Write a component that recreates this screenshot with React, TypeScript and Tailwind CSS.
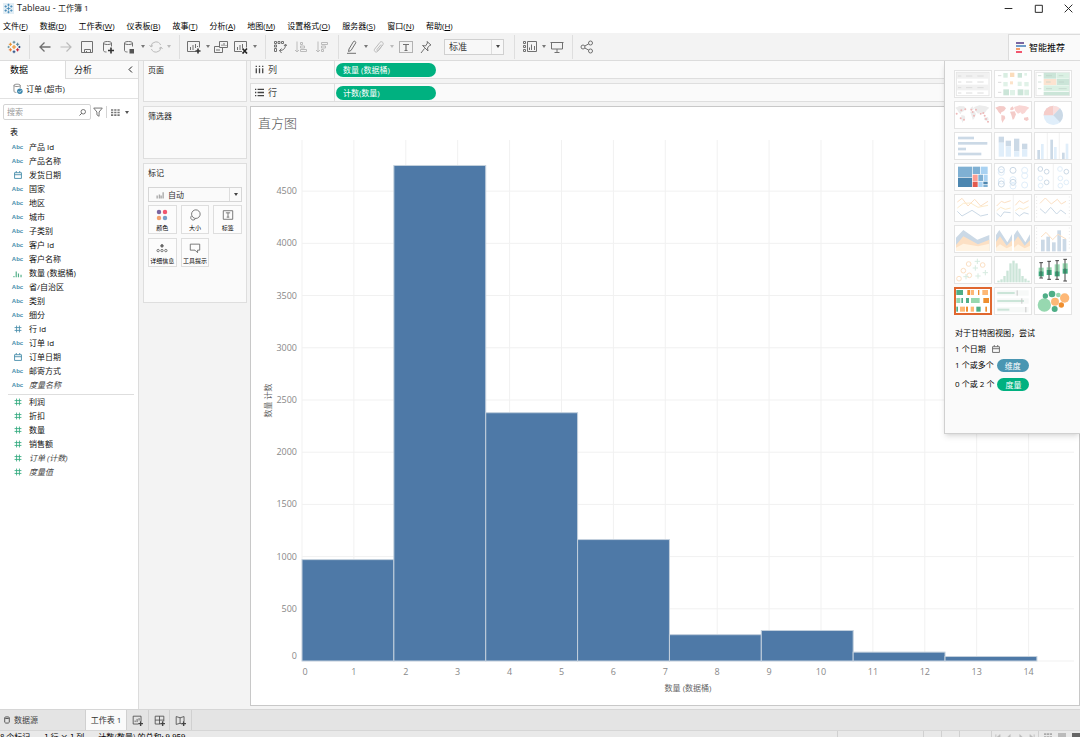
import React from 'react';

const menus = [
  { label: '文件', key: 'F' },
  { label: '数据', key: 'D' },
  { label: '工作表', key: 'W' },
  { label: '仪表板', key: 'B' },
  { label: '故事', key: 'T' },
  { label: '分析', key: 'A' },
  { label: '地图', key: 'M' },
  { label: '设置格式', key: 'O' },
  { label: '服务器', key: 'S' },
  { label: '窗口', key: 'N' },
  { label: '帮助', key: 'H' },
];

type Field = { icon: 'abc' | 'date' | 'bin' | 'num'; name: string; italic?: boolean };

const dimensions: Field[] = [
  { icon: 'abc', name: '产品 Id' },
  { icon: 'abc', name: '产品名称' },
  { icon: 'date', name: '发货日期' },
  { icon: 'abc', name: '国家' },
  { icon: 'abc', name: '地区' },
  { icon: 'abc', name: '城市' },
  { icon: 'abc', name: '子类别' },
  { icon: 'abc', name: '客户 Id' },
  { icon: 'abc', name: '客户名称' },
  { icon: 'bin', name: '数量 (数据桶)' },
  { icon: 'abc', name: '省/自治区' },
  { icon: 'abc', name: '类别' },
  { icon: 'abc', name: '细分' },
  { icon: 'num', name: '行 Id' },
  { icon: 'abc', name: '订单 Id' },
  { icon: 'date', name: '订单日期' },
  { icon: 'abc', name: '邮寄方式' },
  { icon: 'abc', name: '度量名称', italic: true },
];

const measures: Field[] = [
  { icon: 'num', name: '利润' },
  { icon: 'num', name: '折扣' },
  { icon: 'num', name: '数量' },
  { icon: 'num', name: '销售额' },
  { icon: 'num', name: '订单 (计数)', italic: true },
  { icon: 'num', name: '度量值', italic: true },
];

const BIN_SIZE = 1.77;
const X_MAX = 14.875;
const Y_MAX = 4990;
const bins = [971, 4746, 2378, 1163, 252, 292, 85, 43];

/* ---------- icons ---------- */

const Icon = ({ children, size = 'size-[14px]', className = '' }: { children: React.ReactNode; size?: string; className?: string }) => (
  <svg viewBox="0 0 14 14" className={`${size} shrink-0 ${className}`} fill="none" stroke="currentColor" strokeWidth="1" aria-hidden="true">
    {children}
  </svg>
);

const Caret = ({ className = 'text-[#777]' }: { className?: string }) => (
  <span className={`flex w-2 shrink-0 items-center justify-center ${className}`}>
    <svg viewBox="0 0 4 3" className="h-[3px] w-1" fill="currentColor" aria-hidden="true">
      <path d="M0 0h4L2 3z" />
    </svg>
  </span>
);

const plus = (x: number, y: number, r: number) => `M${x - r} ${y}h${2 * r}M${x} ${y - r}v${2 * r}`;

const TableauLogo = () => (
  <Icon>
    <path d={plus(7, 7, 2)} stroke="#eb912c" strokeWidth="1.1" />
    <path d={plus(7, 2.2, 1.4)} stroke="#5b879b" />
    <path d={plus(7, 11.8, 1.4)} stroke="#1f447e" />
    <path d={plus(3.4, 4.3, 1.6)} stroke="#eb912c" />
    <path d={plus(10.6, 4.3, 1.6)} stroke="#59879b" />
    <path d={plus(3.4, 9.8, 1.6)} stroke="#e8762c" />
    <path d={plus(10.6, 9.8, 1.6)} stroke="#c72035" />
    <path d={plus(1.6, 7, 1.1)} stroke="#7099a6" />
    <path d={plus(12.4, 7, 1.1)} stroke="#1f447e" />
  </Icon>
);

const WindowLogo = () => (
  <Icon size="size-[11px]">
    <rect x="0" y="0" width="14" height="14" fill="#e3eef5" stroke="none" />
    <path
      stroke="#3e86b5"
      d={plus(7, 7, 2.4) + plus(7, 2.4, 1.5) + plus(7, 11.6, 1.5) + plus(3.4, 4.4, 1.5) + plus(10.6, 4.4, 1.5) + plus(3.4, 9.6, 1.5) + plus(10.6, 9.6, 1.5)}
    />
  </Icon>
);

const BackIcon = () => <Icon><path strokeWidth="1.3" d="M12.5 7H2M6.5 2.5 2 7l4.5 4.5" /></Icon>;
const ForwardIcon = () => <Icon><path strokeWidth="1.2" d="M1.5 7H12M7.5 2.5 12 7l-4.5 4.5" /></Icon>;
const SaveIcon = () => <Icon><path d="M1.5 1.5h11v11h-11zM4.5 12.5v-3h6v3M6.5 11v1.5" /></Icon>;
const Cylinder = () => <path d="M2.5 3v7.5c0 1 1.5 1.5 3 1.5M10.5 3v3.5M2.5 3c0-1 1.8-1.5 4-1.5s4 .5 4 1.5-1.8 1.5-4 1.5-4-.5-4-1.5" />;
const AddSourceIcon = () => <Icon><Cylinder /><path stroke="#333" strokeWidth="1.6" d="M7 10.5h6M10 7.5v6" /></Icon>;
const PauseSourceIcon = () => <Icon><Cylinder /><path fill="#555" stroke="none" d="M7.5 9h4.5v4.5H7.5z" /></Icon>;
const RefreshIcon = () => <Icon><path d="M2 6.5a5 5 0 0 1 9.6-1.500M12 7.500a5 5 0 0 1-9.600 1.500M.5 5 2 7l2-1.500M10 8.500l2-1.500 1.500 2" /></Icon>;
const NewSheetIcon = () => (
  <Icon><path d="M9 11.5H.5v-10h12v6M3.5 10V7M6 10V5M8.5 8V4M10.5 7V6" /><path stroke="#333" strokeWidth="1.6" d="M8.5 11h5M11 8.5v5" /></Icon>
);
const DuplicateIcon = () => <Icon><path d="M5.5 1.5h8v6h-8zM8 6V4.500M10 6V3M12 6V5M5 6.500H.5v6h8V8M3 11v-2M5 11V9" /></Icon>;
const ClearSheetIcon = () => (
  <Icon><path d="M8 11.500H.5v-10h12v6M3.500 10V7M6 10V5M8.500 8V4" /><path stroke="#222" strokeWidth="1.600" d="m8.500 8.500 4.500 5M13 8.500l-4.500 5" /></Icon>
);
const SwapIcon = () => (
  <Icon><path d="M1.500 1.500h2v2h-2zM5 1.500h2v2H5zM8.500 1.500h2v2h-2zM1.500 5h2v2h-2zM1.500 8.500h2v3h-2zM12.500 4.500c0 4-2 6-6 6M11 6l1.500-2L14 6M8.500 8.500l-2 2 2 2.500" /></Icon>
);
const SortAscIcon = () => <Icon><path d="M3 1.500v10.500M1 10l2 2 2-2M6.500 2.500h2v2h-2zM6.500 6h4v2h-4zM6.500 9.500h6v2h-6z" /></Icon>;
const SortDescIcon = () => <Icon><path d="M3 1.500v10.500M1 10l2 2 2-2M6.500 2.500h6v2h-6zM6.500 6h4v2h-4zM6.500 9.500h2v2h-2z" /></Icon>;
const HighlightIcon = () => <Icon><path d="m4 9 4.500-7.500c1-.8 2.500 0 2.300 1.300L6 10.500l-2.500 1zM2 13.300h9" /></Icon>;
const ClipIcon = () => <Icon><path d="m10.500 5-5 6.500c-1.500 1.500-4-.3-3-2.200l5.500-7c1.300-1.600 4 .2 3 2.200L6.500 10.500c-1 .8-2 0-1.500-1l4-5" /></Icon>;
const TextLabelIcon = () => (
  <Icon><path strokeDasharray="1 1" d="M.5 1.500h13v11H.5z" /><path strokeWidth="1.200" d="M4 4.500h6M7 4.500v6M5.500 10.500h3" /></Icon>
);
const PinIcon = () => <Icon><path d="M8 1.500 12 5l-1.500.5-2 2.500.5 3L3.500 5.500l3 .5L8.500 3zM5.500 8.500 2 13" /></Icon>;
const CardsIcon = () => (
  <Icon><path d="M.5 1.500h2v2h-2zM.5 5.500h2v2h-2zM.5 9.500h2v2h-2zM4.500 1.500h9v10h-9z" /><path d="M6.500 10V7.500M8.500 10V4.500M11.500 10V6" /></Icon>
);
const PresentIcon = () => <Icon><path d="M.5 2.500h13M1.500 2.500v6.500h11V2.500M7 9v3.500M4.500 12.500h5" /></Icon>;
const ShareIcon = () => (
  <Icon><circle cx="3" cy="7" r="2" /><circle cx="10.500" cy="3" r="2" /><circle cx="10.500" cy="11" r="2" /><path d="m4.800 6 4-2.200M4.800 8l4 2.200" /></Icon>
);

const CalendarIcon = ({ className = '' }: { className?: string }) => (
  <Icon size="size-2" className={className}><path strokeWidth="1.600" d="M1 3h12v10H1zM1 6.500h12M4 0v3M10 0v3" /></Icon>
);

const FieldIcon = ({ icon }: { icon: Field['icon'] }) => {
  if (icon === 'abc') return <span className="font-['Liberation_Sans',sans-serif] text-[6px] font-bold text-[#4a8fac]">Abc</span>;
  if (icon === 'date') return <CalendarIcon />;
  if (icon === 'bin')
    return <Icon size="size-[9px]" className="text-[#4fae87]"><path strokeWidth="1.800" d="M1.500 13v-2M5 13V4M8.500 13V7M12.500 13v-4" /></Icon>;
  return <Icon size="size-2"><path strokeWidth="1.500" d="M4.500 1v12M9.500 1v12M1 4.500h12M1 9.500h12" /></Icon>;
};

/* ---------- show-me thumbnails, drawn on a 114x84 grid ---------- */

const R = ({ x, y, w, h, f }: { x: number; y: number; w: number; h: number; f: string }) => <rect x={x} y={y} width={w} height={h} fill={f} />;

const lands = [
  'M4 20 16 15 30 16 36 22 30 30 22 34 20 40 14 34 10 27z',
  'M22 42 32 44 34 52 28 60 26 66 22 56z',
  'M50 20 56 16 60 24 54 28 48 26z',
  'M48 32 62 31 66 40 60 54 56 56 52 42z',
  'M60 18 76 13 96 16 106 20 98 28 92 36 84 40 80 34 72 38 64 30z',
  'M90 50 102 48 104 56 98 60 90 56z',
];

const TextTable = () => (
  <>
    <rect x="7" y="7" width="98" height="70" fill="#fff" stroke="#e6e6e6" strokeWidth="3" />
    <R x={9} y={9} w={94} h={17} f="#f1f1f1" />
    <R x={9} y={44} w={94} h={17} f="#f1f1f1" />
    {[18, 36, 53, 69].map((y) => (
      <path key={y} d={`M12 ${y}h10M36 ${y}h19M70 ${y}h19`} stroke="#dcdcdc" strokeWidth="3" />
    ))}
  </>
);

const HeatMap = () => (
  <>
    <path d="M12 17h10M12 37h10M12 67h10" stroke="#ddd" strokeWidth="3" />
    <R x={28} y={9} w={13} h={14} f="#d9eee2" />
    <R x={48} y={8} w={13} h={13} f="#fbdcbb" />
    <R x={71} y={9} w={13} h={14} f="#cbe5d8" />
    <R x={91} y={9} w={8} h={8} f="#e0f2e8" />
    <R x={28} y={36} w={13} h={13} f="#e0f2e8" />
    <R x={48} y={34} w={9} h={9} f="#fce3ca" />
    <R x={71} y={35} w={12} h={13} f="#e0f2e8" />
    <R x={91} y={36} w={13} h={13} f="#e0f2e8" />
    <R x={28} y={58} w={17} h={18} f="#cbe5d8" />
    <R x={48} y={60} w={15} h={16} f="#e0f2e8" />
    <R x={71} y={58} w={17} h={18} f="#cbe5d8" />
    <R x={91} y={59} w={14} h={17} f="#d9eee2" />
  </>
);

const HighlightTable = () => (
  <>
    <rect x="6" y="7" width="100" height="70" fill="#fff" stroke="#e6e6e6" strokeWidth="3" />
    <R x={29} y={8} w={38} h={18} f="#cbe5d8" />
    <R x={68} y={8} w={38} h={18} f="#daf0e3" />
    <R x={29} y={27} w={38} h={18} f="#fce3d0" />
    <R x={68} y={27} w={38} h={18} f="#cbe5d8" />
    <R x={29} y={46} w={77} h={18} f="#daf0e3" />
    <R x={29} y={66} w={77} h={10} f="#cbe5d8" />
    <path d="M12 17h10M12 36h10M12 56h10M36 17h18M74 17h14M36 36h14M74 36h16M36 56h18M74 56h24" stroke="#bcd0c6" strokeWidth="2" />
  </>
);

const SymbolMap = () => (
  <>
    {lands.map((d) => <path key={d} d={d} fill="#ececec" />)}
    {[[8, 38], [22, 28], [34, 25], [20, 52], [30, 56], [52, 26], [56, 33], [60, 44], [80, 38], [88, 36], [92, 44], [96, 54], [102, 62], [66, 26]].map(([x, y]) => (
      <circle key={`${x}-${y}`} cx={x} cy={y} r="3" fill="#eeb9b9" />
    ))}
  </>
);

const FilledMap = () => (
  <>{lands.map((d, i) => <path key={d} d={d} fill={i === 4 ? '#f9d6d4' : '#f4cbc8'} />)}</>
);

const Pie = () => (
  <>
    <circle cx="58" cy="43" r="29" fill="#e0eefa" />
    <path d="M58 43V14A29 29 0 0 0 29 43z" fill="#f6cdc9" />
    <path d="M58 43V14A29 29 0 0 1 78 22z" fill="#fbdedc" />
    <path d="M58 43 78 22A29 29 0 0 1 78 64z" fill="#cbd9e6" />
  </>
);

const HBars = () => (
  <>
    <R x={12} y={14} w={48} h={8} f="#cbd9e6" />
    <R x={12} y={30} w={88} h={8} f="#cbd9e6" />
    <R x={12} y={47} w={24} h={8} f="#cbd9e6" />
    <R x={12} y={62} w={70} h={8} f="#cbd9e6" />
  </>
);

const StackedBars = () => (
  <>
    {[[14, 14, 32], [35, 26, 43], [60, 20, 58], [84, 35, 52]].map(([x, a, b]) => (
      <g key={x}>
        <R x={x} y={a} w={16} h={b - a} f="#cbd9e6" />
        <R x={x} y={b} w={16} h={74 - b} f="#e0eefa" />
      </g>
    ))}
  </>
);

const SideBars = () => (
  <>
    <path d="M40 3v78M76 3v78" stroke="#ececec" strokeWidth="2" />
    {[[10, 54, 36], [49, 23, 45], [84, 62, 35]].map(([x, a, b]) => (
      <g key={x}>
        <R x={x} y={a} w={8} h={82 - a} f="#cbd9e6" />
        <R x={x + 11} y={b} w={8} h={82 - b} f="#e0eefa" />
      </g>
    ))}
  </>
);

const TreeMap = () => (
  <>
    <R x={12} y={11} w={42} h={31} f="#7fb0d3" />
    <R x={12} y={44} w={42} h={28} f="#4c86b0" />
    <R x={56} y={11} w={22} h={22} f="#7fb0d3" />
    <R x={80} y={11} w={21} h={22} f="#a9d2f2" />
    <R x={56} y={35} w={15} h={19} f="#fd9e92" />
    <R x={56} y={56} w={15} h={16} f="#e15b50" />
    <R x={73} y={35} w={14} h={19} f="#7fb0d3" />
    <R x={89} y={35} w={12} h={19} f="#a9d2f2" />
    <R x={73} y={56} w={13} h={16} f="#a9d2f2" />
    <R x={88} y={56} w={13} h={8} f="#4c86b0" />
    <R x={88} y={66} w={13} h={6} f="#7fb0d3" />
  </>
);

const Rings = ({ points, r }: { points: number[][]; r: number }) => (
  <>
    {points.map(([x, y, dark]) => (
      <circle key={`${x}-${y}`} cx={x} cy={y} r={r} fill="none" strokeWidth="3" stroke={dark ? '#cbd9e6' : '#e0eefa'} />
    ))}
  </>
);

const CircleViews = () => (
  <Rings r={9} points={[[22, 20, 1], [22, 28, 0], [22, 54, 0], [22, 63, 1], [57, 22, 1], [57, 50, 0], [57, 58, 1], [57, 69, 0], [92, 22, 0], [92, 38, 0], [92, 66, 0]]} />
);

const SideCircles = () => (
  <>
    <path d="M58 3v78" stroke="#ececec" strokeWidth="2" />
    <Rings r={7} points={[[19, 18, 1], [38, 26, 1], [19, 46, 0], [38, 58, 1], [20, 68, 0], [78, 18, 0], [97, 26, 1], [79, 46, 0], [97, 58, 0], [79, 68, 0]]} />
  </>
);

const Poly = ({ p, c }: { p: string; c: string }) => <polyline points={p} fill="none" stroke={c} strokeWidth="3" />;

const Lines = () => (
  <>
    <Poly p="10,24 24,13 42,36 62,16 80,36 102,22" c="#fce0c4" />
    <Poly p="10,42 28,28 50,27 72,40 102,34" c="#fdebcb" />
    <Poly p="10,52 24,66 54,49 80,66 102,61" c="#cbd9e6" />
  </>
);

const DiscreteLines = () => (
  <>
    <path d="M58 3v78" stroke="#ececec" strokeWidth="2" />
    <Poly p="8,36 22,22 32,26 50,20" c="#fce0c4" />
    <Poly p="64,34 76,20 88,28 104,20" c="#fce0c4" />
    <Poly p="8,50 20,40 34,46 50,42" c="#fdebcb" />
    <Poly p="64,50 76,42 88,46 104,38" c="#fdebcb" />
    <Poly p="8,58 20,68 30,54 50,56" c="#cbd9e6" />
    <Poly p="64,56 76,66 90,56 104,60" c="#cbd9e6" />
  </>
);

const DualLines = () => (
  <>
    <path strokeDasharray="2 8" d="M8 8v70M106 8v70" stroke="#ddd" strokeWidth="3" />
    <Poly p="18,28 34,12 52,30 70,16 82,30 96,22" c="#fce0c4" />
    <Poly p="18,44 34,58 50,40 68,60 80,48 96,60" c="#cbd9e6" />
  </>
);

const Area = () => (
  <>
    <path d="M6 38 28 15 70 44 106 30V78H6z" fill="#cbd9e6" />
    <path d="M6 60 28 34 72 58 106 44V78H6z" fill="#fce0c4" />
    <path d="M6 68 28 56 72 64 106 56V78H6z" fill="#fff3e2" />
  </>
);

const DiscreteArea = () => (
  <>
    {[6, 60].map((x) => (
      <g key={x} transform={`translate(${x} 0)`}>
        <path d="M0 30 10 15 34 52 48 28V78H0z" fill="#cbd9e6" />
        <path d="M0 50 12 34 32 62 48 46V78H0z" fill="#fce0c4" />
        <path d="M0 68 12 58 32 70 48 62V78H0z" fill="#fff3e2" />
      </g>
    ))}
  </>
);

const Combo = () => (
  <>
    <path strokeDasharray="2 8" d="M8 8v70M106 8v70" stroke="#ddd" strokeWidth="3" />
    {[[21, 44], [37, 35], [54, 52], [70, 16], [86, 42]].map(([x, y]) => <R key={x} x={x} y={y} w={11} h={79 - y} f="#cbd9e6" />)}
    <Poly p="21,36 36,22 56,44 72,28 96,42" c="#fce0c4" />
  </>
);

const Scatter = () => (
  <>
    {[[44, 24], [28, 44], [86, 27], [15, 68], [46, 58]].map(([x, y]) => <circle key={x} cx={x} cy={y} r="7" fill="none" stroke="#fce0c4" strokeWidth="3" />)}
    <path d={plus(70, 16, 8) + plus(64, 36, 8) + plus(36, 62, 8) + plus(72, 60, 8) + plus(94, 50, 8)} stroke="#d7ebe0" strokeWidth="3" />
  </>
);

const Histogram = () => (
  <>
    {[74, 70, 60, 44, 22, 14, 22, 38, 60, 68, 74].map((y, i) => <R key={i} x={10 + i * 9} y={y} w={7} h={79 - y} f="#cbe5d8" />)}
  </>
);

const BoxPlot = () => (
  <>
    {[[14, 35, 20, 46, 66], [38, 34, 16, 42, 70], [62, 25, 14, 46, 70], [86, 22, 10, 38, 75]].map(([x, a, top, m, bottom]) => (
      <g key={x}>
        <path d={`M${x + 7} ${top}V${bottom}M${x + 2} ${top}h11M${x + 2} ${bottom}h11`} stroke="#444" strokeWidth="3" />
        <R x={x} y={a} w={15} h={m - a} f="#97d8b0" />
        <R x={x} y={m} w={15} h={15} f="#3ea67b" />
        <path d={`M${x + 7} ${a}V${m + 15}`} stroke="#444" strokeWidth="2" />
      </g>
    ))}
  </>
);

const gantt: [number, number, number, string][] = [
  [7, 9, 20, '#4fae87'], [40, 9, 8, '#ef8e2f'], [50, 9, 10, '#fdb877'], [72, 9, 4, '#ef8e2f'], [85, 9, 17, '#fdb877'],
  [7, 33, 12, '#97d8b0'], [22, 33, 5, '#4fae87'], [36, 33, 9, '#4fae87'], [51, 33, 26, '#97d8b0'], [88, 33, 17, '#ef8e2f'],
  [7, 59, 5, '#4fae87'], [18, 59, 15, '#fdb877'], [36, 59, 6, '#ef8e2f'], [50, 59, 10, '#fdb877'], [67, 59, 13, '#4fae87'], [94, 59, 5, '#ef8e2f'],
];

const Gantt = () => <>{gantt.map(([x, y, w, f]) => <R key={`${x}-${y}`} x={x} y={y} w={w} h={15} f={f} />)}</>;

const Bullet = () => (
  <>
    {[[10, 52, 68], [34, 80, 82], [60, 36, 94]].map(([y, w, m]) => (
      <g key={y}>
        <R x={8} y={y} w={96} h={16} f="#f7f9f8" />
        <R x={10} y={y + 5} w={w} h={6} f="#cbe5d8" />
        <R x={m} y={y} w={3} h={16} f="#c8c8c8" />
      </g>
    ))}
  </>
);

const Bubbles = () => (
  <>
    {([[31, 54, 20, '#97d8b0'], [34, 27, 8, '#4fae87'], [54, 21, 10, '#4fae87'], [73, 24, 7, '#97d8b0'], [63, 44, 12, '#fdb877'], [92, 33, 14, '#fdb877'], [82, 54, 8, '#ef8e2f'], [62, 66, 9, '#4fae87']] as [number, number, number, string][]).map(([x, y, r, f]) => (
      <circle key={x} cx={x} cy={y} r={r} fill={f} />
    ))}
  </>
);

const showMe: [string, React.FC][] = [
  ['文本表', TextTable], ['热图', HeatMap], ['突出显示表', HighlightTable],
  ['符号地图', SymbolMap], ['填充地图', FilledMap], ['饼图', Pie],
  ['水平条', HBars], ['堆叠条', StackedBars], ['并排条', SideBars],
  ['树状图', TreeMap], ['圆视图', CircleViews], ['并排圆', SideCircles],
  ['线(连续)', Lines], ['线(离散)', DiscreteLines], ['双线', DualLines],
  ['区域(连续)', Area], ['区域(离散)', DiscreteArea], ['双组合', Combo],
  ['散点图', Scatter], ['直方图', Histogram], ['盒须图', BoxPlot],
  ['甘特图', Gantt], ['靶心图', Bullet], ['填充气泡图', Bubbles],
];

/* ---------- sections ---------- */

const TitleBar = () => (
  <header className="flex h-4 items-center bg-white px-[3px]">
    <WindowLogo />
    <h1 className="ml-[3px] text-[9px]">Tableau - <span className="text-[8px]">工作簿 1</span></h1>
    <div className="ml-auto flex items-center pr-1 text-[#222]">
      <button aria-label="最小化"><Icon size="size-[9px]"><path strokeWidth="1.500" d="M1 7h12" /></Icon></button>
      <button aria-label="最大化" className="ml-[21px]"><Icon size="size-[9px]"><path strokeWidth="1.500" d="M2 2h11v11H2z" /></Icon></button>
      <button aria-label="关闭" className="ml-[21px]"><Icon size="size-[9px]"><path strokeWidth="1.500" d="m1 1 12 12M13 1 1 13" /></Icon></button>
    </div>
  </header>
);

const MenuBar = () => (
  <nav className="flex h-[17px] items-end gap-3 bg-white px-[3px] pb-px">
    {menus.map((m) => (
      <button key={m.key} className="whitespace-nowrap text-[8px] leading-3 text-black">
        {m.label}(<span className="underline">{m.key}</span>)
      </button>
    ))}
  </nav>
);

const Tool = ({ label, width = 'w-[21px]', muted, children }: { label: string; width?: string; muted?: boolean; children: React.ReactNode }) => (
  <button aria-label={label} title={label} className={`flex h-full shrink-0 items-center justify-center ${width} ${muted ? 'text-[#bbb]' : 'text-[#707070]'}`}>
    {children}
  </button>
);

const Divider = () => <span className="mr-[3px] ml-[6px] h-6 w-px shrink-0 self-center bg-[#dedede]" />;

const Toolbar = () => (
  <div className="flex h-7 items-center border-b border-[#dcdcdc] bg-[#f3f3f3]">
    <Tool label="起始页" width="w-7"><TableauLogo /></Tool>
    <span className="mr-1 ml-px h-6 w-px shrink-0 bg-[#dedede]" />
    <Tool label="撤消"><BackIcon /></Tool>
    <Tool label="重做" muted><ForwardIcon /></Tool>
    <Tool label="保存"><SaveIcon /></Tool>
    <Tool label="新建数据源"><AddSourceIcon /></Tool>
    <Tool label="暂停自动更新"><PauseSourceIcon /></Tool>
    <Caret />
    <Tool label="运行更新" width="w-[18px]" muted><RefreshIcon /></Tool>
    <Caret className="text-[#bbb]" />
    <Divider />
    <Tool label="新建工作表"><NewSheetIcon /></Tool>
    <Caret />
    <Tool label="复制工作表" width="w-[18px]"><DuplicateIcon /></Tool>
    <Tool label="清除工作表"><ClearSheetIcon /></Tool>
    <Caret />
    <Divider />
    <Tool label="交换行和列"><SwapIcon /></Tool>
    <Tool label="升序排序" muted><SortAscIcon /></Tool>
    <Tool label="降序排序" muted><SortDescIcon /></Tool>
    <Divider />
    <Tool label="突出显示" width="w-5"><HighlightIcon /></Tool>
    <Caret />
    <Tool label="组成员" width="w-[18px]" muted><ClipIcon /></Tool>
    <Caret className="text-[#bbb]" />
    <Tool label="显示标记标签" width="w-5"><TextLabelIcon /></Tool>
    <Tool label="固定轴" width="w-5"><PinIcon /></Tool>
    <div className="relative ml-2 flex h-4 w-[60px] shrink-0 border border-[#d0d0d0] bg-[#f8f8f8]">
      <select aria-label="适合" className="w-full appearance-none bg-transparent pl-1 text-[9px] leading-3 text-[#333] outline-none">
        <option>标准</option>
      </select>
      <span className="pointer-events-none absolute inset-y-0 right-0 flex w-3 items-center justify-center border-l border-[#ddd]">
        <Caret className="text-[#444]" />
      </span>
    </div>
    <span className="mr-1 ml-[10px] h-6 w-px shrink-0 bg-[#dedede]" />
    <Tool label="显示/隐藏卡"><CardsIcon /></Tool>
    <Caret />
    <Tool label="演示模式" width="w-[18px]"><PresentIcon /></Tool>
    <Divider />
    <Tool label="共享工作簿"><ShareIcon /></Tool>
    <button className="ml-auto flex h-[26px] w-[72px] shrink-0 items-center gap-[3px] self-end border-t border-l border-[#dcdcdc] bg-[#fafafa] pl-[7px] text-[9px] text-black">
      <svg viewBox="0 0 10 11" className="h-[11px] w-[10px]" aria-hidden="true">
        <path d="M0 0h8v2H0z" fill="#7b66a0" />
        <path d="M0 3h10v2H0z" fill="#6f9bc9" />
        <path d="M0 6h4v2H0z" fill="#f5a06c" />
        <path d="M0 9h6v2H0z" fill="#f2566e" />
      </svg>
      智能推荐
    </button>
  </div>
);

const FieldRow = ({ field, color }: { field: Field; color: string }) => (
  <li className="flex h-[14px] items-center pl-[10px]">
    <span className={`flex w-[15px] justify-center ${color}`}><FieldIcon icon={field.icon} /></span>
    <span className={`ml-1 text-[8px] ${field.italic ? 'text-[#444] italic' : 'text-[#111]'}`}>{field.name}</span>
  </li>
);

const DataPane = () => (
  <aside className="w-[139px] shrink-0 border-r border-[#dcdcdc] bg-white">
    <div className="flex h-[18px] text-[9px]">
      <button className="w-[65px] pl-[10px] text-left text-black">数据</button>
      <button className="flex flex-1 items-center justify-between border-b border-l border-[#dcdcdc] bg-[#fafafa] pr-1 pl-2 text-[#222]">
        分析
        <Icon size="size-[7px]"><path strokeWidth="2" d="M10 1 4 7l6 6" /></Icon>
      </button>
    </div>
    <div className="flex h-5 items-center gap-[3px] border-b border-[#e2e2e2] pl-3 text-[8px] text-[#222]">
      <Icon size="size-[11px]" className="text-[#777]">
        <Cylinder />
        <circle cx="10" cy="10.500" r="3.500" fill="#3c87ad" stroke="none" />
        <path d="m8.300 10.500 1.300 1.300 2.300-2.500" stroke="#fff" />
      </Icon>
      订单 (超市)
    </div>
    <div className="flex h-[26px] items-center pl-[3px]">
      <label className="flex h-4 w-[88px] items-center rounded-xs border border-[#d4d4d4] pr-1 pl-[3px]">
        <input type="search" aria-label="搜索" placeholder="搜索" className="w-full min-w-0 text-[8px] leading-3 outline-none placeholder:text-[#999]" />
        <Icon size="size-[7px]" className="text-[#555]"><circle cx="8.500" cy="5.500" r="4.500" strokeWidth="1.600" /><path strokeWidth="1.800" d="M5.500 8.500 1 13" /></Icon>
      </label>
      <button aria-label="筛选字段" className="ml-[2px] text-[#777]">
        <Icon size="size-[10px]"><path strokeWidth="1.400" d="M1 1.500h12L8.500 7v6L5.500 11V7z" /></Icon>
      </button>
      <span className="ml-[3px] h-3 w-px bg-[#d4d4d4]" />
      <button aria-label="视图选项" className="ml-1 flex items-center gap-[3px] text-[#777]">
        <Icon size="size-[9px]"><path strokeWidth="2.500" strokeDasharray="3.500 1.500" d="M0 3h14M0 7h14M0 11h14" /></Icon>
        <Caret className="text-[#555]" />
      </button>
    </div>
    <h2 className="mb-[2px] flex h-[13px] items-center pl-[10px] text-[8px] text-black">表</h2>
    <ul>
      {dimensions.map((f) => <FieldRow key={f.name} field={f} color="text-[#4a8fac]" />)}
    </ul>
    <hr className="mt-[2px] mr-1 ml-2 border-[#dedede]" />
    <ul>
      {measures.map((f) => <FieldRow key={f.name} field={f} color="text-[#35ab80]" />)}
    </ul>
  </aside>
);

const Card = ({ title, height, children }: { title: string; height: string; children?: React.ReactNode }) => (
  <section className={`border border-[#dedede] bg-[#fafafa] px-1 first:border-t-0 ${height}`}>
    <h2 className="flex h-[18px] items-center text-[8px] text-[#222]">{title}</h2>
    {children}
  </section>
);

const markButtons = [
  {
    label: '颜色',
    icon: (
      <Icon size="size-3">
        <g stroke="none">
          <circle cx="3.500" cy="3.500" r="2.600" fill="#7b66a0" />
          <circle cx="10.500" cy="3.500" r="2.600" fill="#f2566e" />
          <circle cx="3.500" cy="10.500" r="2.600" fill="#f5a06c" />
          <circle cx="10.500" cy="10.500" r="2.600" fill="#7a9fc9" />
        </g>
      </Icon>
    ),
  },
  { label: '大小', icon: <Icon size="size-3"><circle cx="8" cy="6" r="5" /><path d="M3 8a2.800 2.800 0 1 0 4.500 3" /></Icon> },
  { label: '标签', icon: <Icon size="size-3"><path d="M1.500 2h11v10h-11zM4.500 4.500h5M7 4.500v5M5.500 9.500h3" /></Icon> },
  {
    label: '详细信息',
    icon: <Icon size="size-3"><circle cx="7" cy="4.500" r="1.500" fill="currentColor" /><circle cx="2.500" cy="10" r="1.400" /><circle cx="7" cy="10" r="1.400" /><circle cx="11.500" cy="10" r="1.400" /></Icon>,
  },
  { label: '工具提示', icon: <Icon size="size-3"><path d="M1.500 2.500h11v7h-2.500v3l-3-3H1.500z" /></Icon> },
];

const CardColumn = () => (
  <div className="flex w-[111px] shrink-0 flex-col gap-1 pr-[3px] pl-1">
    <Card title="页面" height="h-[41px]" />
    <Card title="筛选器" height="h-[53px]" />
    <Card title="标记" height="h-[140px]">
      <div className="relative mt-[5px] flex h-[15px] items-center border border-[#d6d6d6] pl-[7px]">
        <Icon size="size-2" className="text-[#aaa]"><path strokeWidth="2.400" d="M2 13V8M6 13V6M9 13V8M12.500 13V2" /></Icon>
        <select aria-label="标记类型" className="w-full appearance-none bg-transparent pl-1 text-[8px] leading-3 text-[#333] outline-none">
          <option>自动</option>
        </select>
        <span className="pointer-events-none absolute inset-y-0 right-0 flex w-3 items-center justify-center border-l border-[#ddd]">
          <Caret className="text-[#444]" />
        </span>
      </div>
      <div className="mt-[3px] grid grid-cols-3 gap-1">
        {markButtons.map((b) => (
          <button key={b.label} className="flex h-[29px] flex-col items-center justify-end gap-[3px] border border-[#dedede] bg-[#fcfcfc] text-[#666]">
            {b.icon}
            <span className="text-[6px] leading-[9px] whitespace-nowrap text-black">{b.label}</span>
          </button>
        ))}
      </div>
    </Card>
  </div>
);

const Shelf = ({ label, icon, pill }: { label: string; icon: React.ReactNode; pill: string }) => (
  <div className="flex h-[19px] items-center border-y border-l border-[#dedede] bg-[#fafafa] first:h-[18px] first:border-t-0">
    <div className="flex h-full w-[84px] items-center gap-1 border-r border-[#dedede] pl-1 text-[9px] text-[#444]">
      {icon}
      {label}
    </div>
    <button className="ml-px h-[14px] w-[100px] rounded-full bg-[#00b180] pl-[7px] text-left text-[8px] leading-[14px] text-white">{pill}</button>
  </div>
);

const pctX = (v: number) => `${(v / X_MAX) * 100}%`;
const pctY = (v: number) => `${100 - (v / Y_MAX) * 100}%`;

const HistogramView = () => (
  <section className="flex min-h-0 flex-1 flex-col border border-[#c8c8c8] bg-white">
    <h2 className="h-[33px] pt-[6px] pl-[7px] text-[13px] leading-5 font-light text-[#555]">直方图</h2>
    <div className="min-h-0 flex-1 pr-[5px] pb-11 pl-[51px]">
      <svg className="block h-full w-full overflow-visible font-['Open_Sans','Noto_Sans_CJK_SC',sans-serif] text-[8px]" role="img" aria-label="数量直方图">
        {Array.from({ length: 15 }, (_, i) => (
          <line key={i} x1={pctX(i)} x2={pctX(i)} y1="0" y2="100%" stroke="#f1f1f1" />
        ))}
        {Array.from({ length: 10 }, (_, i) => (
          <line key={i} x1="0" x2="100%" y1={pctY(i * 500)} y2={pctY(i * 500)} stroke="#f1f1f1" />
        ))}
        {bins.map((n, i) => (
          <rect key={i} x={pctX(i * BIN_SIZE)} y={pctY(n)} width={pctX(BIN_SIZE)} height={`${(n / Y_MAX) * 100}%`} fill="#4e79a7" stroke="#c3d0dd" strokeWidth="1" />
        ))}
        {/* the zero labels sit just inside the axis ends */}
        <g className="text-[9px]" fill="#888">
          {Array.from({ length: 10 }, (_, i) => (
            <text key={i} x="-5" y={pctY(i * 500)} dy={i ? 3 : -2} textAnchor="end">{i * 500}</text>
          ))}
          {Array.from({ length: 15 }, (_, i) => (
            <text key={i} x={pctX(i)} y="100%" dx={i ? 0 : 3} dy="14" textAnchor="middle">{i}</text>
          ))}
        </g>
        <text x="50%" y="100%" dy="30" textAnchor="middle" fill="#666">数量 (数据桶)</text>
        <svg x="-31" y="50%" overflow="visible">
          <text transform="rotate(-90)" textAnchor="middle" fill="#666">数量 计数</text>
        </svg>
      </svg>
    </div>
  </section>
);

const ShowMePanel = () => (
  <aside className="absolute top-0 right-0 h-[373px] w-[136px] border-b border-l border-[#d0d0d0] bg-[#fafafa] px-[9px] pt-[9px] text-[8px] text-black shadow-md">
    <div className="grid w-[118px] grid-cols-3 gap-x-[2px] gap-y-[3px]">
      {showMe.map(([name, Thumb]) => (
        <button
          key={name}
          aria-label={name}
          className={`h-7 w-[38px] border bg-white ${name === '甘特图' ? 'outline outline-1 -outline-offset-2 border-[#e0672f] outline-[#e0672f]' : 'border-[#e4e4e4]'}`}
        >
          <svg viewBox="3 3 108 78" className="h-full w-full" aria-hidden="true"><Thumb /></svg>
        </button>
      ))}
    </div>
    <div className="mt-[10px] pl-px">
      <p className="h-4 leading-4">对于甘特图视图，尝试</p>
      <p className="flex h-4 items-center gap-[6px] leading-4">1 个日期 <CalendarIcon className="text-[#666]" /></p>
      <p className="flex h-4 items-center gap-[3px]">
        1 个或多个 <span className="h-[13px] w-8 rounded-full bg-[#4996b2] text-center leading-[13px] text-white">维度</span>
      </p>
      <p className="mt-[2px] flex h-[18px] items-center gap-[3px]">
        0 个或 2 个 <span className="h-[13px] w-8 rounded-full bg-[#00b180] text-center leading-[13px] text-white">度量</span>
      </p>
    </div>
  </aside>
);

const SheetTabs = () => (
  <div className="flex h-[21px] shrink-0 items-stretch border-t border-[#d6d6d6] bg-[#e4e4e4] text-[8px] text-[#444]">
    <button className="flex w-[86px] items-center gap-[3px] border-r border-[#d0d0d0] pl-[3px]">
      <Icon size="size-2"><path strokeWidth="1.500" d="M3 3v8c0 2 8 2 8 0V3M3 3c0-2 8-2 8 0s-8 2-8 0" /></Icon>
      数据源
    </button>
    <button className="w-[41px] border-r border-[#d0d0d0] bg-[#fafafa] text-[#333]">工作表 1</button>
    <button aria-label="新建工作表" className="flex w-[22px] items-center justify-center border-r border-[#d0d0d0]">
      <Icon size="size-[11px]"><path d="M8 11.500H1.500v-10h10V8M4 9V7M6.500 9V5M9 7V4" /><path strokeWidth="1.800" d="M8 11h6M11 8v6" /></Icon>
    </button>
    <button aria-label="新建仪表板" className="flex w-[21px] items-center justify-center border-r border-[#d0d0d0]">
      <Icon size="size-[11px]"><path d="M8 11.500H1.500v-10h11V8M1.500 6.500h11M7 1.500v10" /><path strokeWidth="1.800" d="M8 11h6M11 8v6" /></Icon>
    </button>
    <button aria-label="新建故事" className="flex w-[22px] items-center justify-center border-r border-[#d0d0d0]">
      <Icon size="size-[11px]"><path d="M8 11.500 6.500 10.500 1.500 12V2l5 1.500 5-1.500v6M6.500 3.500v7" /><path strokeWidth="1.800" d="M8 11h6M11 8v6" /></Icon>
    </button>
  </div>
);

const StatusBar = () => (
  <footer className="flex h-[7px] shrink-0 overflow-hidden border-t border-[#d6d6d6] bg-[#e9e9e9] font-['Noto_Sans_CJK_SC',sans-serif] text-[8px] leading-3 text-black">
    <span>8 个标记</span>
    <span className="ml-[14px]">1 行 × 1 列</span>
    <span className="ml-[14px]">计数(数量) 的总和: 9,959</span>
    <div className="ml-auto flex">
      <span className="w-[86px] border-l border-[#d0d0d0]" />
      <span className="w-[18px] border-l border-[#d0d0d0]" />
      <span className="w-[18px] border-l border-[#d0d0d0]" />
      <span className="w-8 border-l border-[#d0d0d0]" />
      <span className="flex w-[47px] justify-around border-l border-[#d0d0d0] pt-[3px] text-[#bbb]">
        <Icon size="size-[6px]"><path strokeWidth="2" d="M2 1v12" /><path fill="currentColor" d="M12 1v12L5 7z" /></Icon>
        <Icon size="size-[6px]"><path fill="currentColor" d="M10 1v12L4 7z" /></Icon>
        <Icon size="size-[6px]"><path fill="currentColor" d="M4 1v12l6-6z" /></Icon>
        <Icon size="size-[6px]"><path strokeWidth="2" d="M12 1v12" /><path fill="currentColor" d="M2 1v12l7-6z" /></Icon>
      </span>
      <span className="flex w-[42px] justify-between border-l border-[#d0d0d0] pt-[2px] pl-[5px]">
        <Icon size="size-2" className="text-[#aaa]"><path strokeWidth="3" strokeDasharray="4 1" d="M0 2h14M0 7h14M0 12h14" /></Icon>
        <span className="h-2 w-2 bg-[#bbb]" />
        <span className="h-2 w-2 bg-[#666]" />
      </span>
    </div>
  </footer>
);

const App: React.FC = () => {
  return (
    <div className="flex h-screen flex-col overflow-hidden bg-[#f3f3f3] font-['Open_Sans','Noto_Sans_CJK_SC',sans-serif] text-[#222]">
      <TitleBar />
      <MenuBar />
      <Toolbar />
      <main className="relative flex min-h-0 flex-1">
        <DataPane />
        <CardColumn />
        <div className="flex min-w-0 flex-1 flex-col gap-1 pb-[3px]">
          <Shelf label="列" pill="数量 (数据桶)" icon={<Icon size="size-[9px]"><path strokeWidth="2" d="M2 5v8M7 5v8M12 5v8M2 1v2M7 1v2M12 1v2" /></Icon>} />
          <Shelf label="行" pill="计数(数量)" icon={<Icon size="size-[9px]"><path strokeWidth="2" d="M4 2h10M4 7h10M4 12h10M0 2h2M0 7h2M0 12h2" /></Icon>} />
          <HistogramView />
        </div>
        <ShowMePanel />
      </main>
      <SheetTabs />
      <StatusBar />
    </div>
  );
};

export default App;
